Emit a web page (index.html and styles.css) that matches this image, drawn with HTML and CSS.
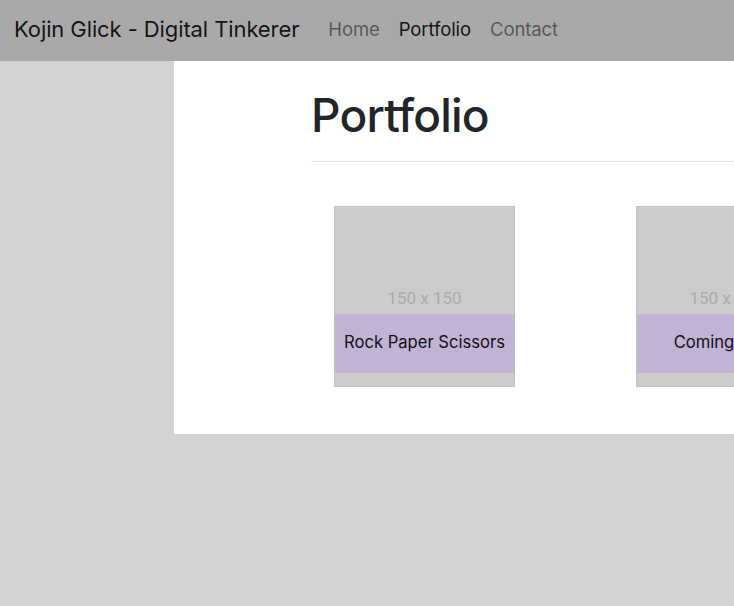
FILE: index.html
```html
<!DOCTYPE html>
<html lang="en">
<head>
<meta charset="utf-8">
<title>Kojin Glick - Portfolio</title>
<link rel="stylesheet" href="styles.css">
</head>
<body>
<nav class="navbar">
  <a class="brand" href="#">Kojin Glick - Digital Tinkerer</a>
  <ul class="nav-links">
    <li><a class="nav-link" href="#">Home</a></li>
    <li><a class="nav-link active" href="#">Portfolio</a></li>
    <li><a class="nav-link" href="#">Contact</a></li>
  </ul>
</nav>
<main class="panel">
  <h1 class="title">Portfolio</h1>
  <hr class="rule">
  <div class="cards">
    <div class="card">
      <div class="placeholder"><span class="ph-text">150 x 150</span></div>
      <div class="caption">Rock Paper Scissors</div>
    </div>
    <div class="card">
      <div class="placeholder"><span class="ph-text">150 x 150</span></div>
      <div class="caption">Coming Soon</div>
    </div>
  </div>
</main>
</body>
</html>
```
FILE: styles.css
```css
html, body {
  margin: 0;
  padding: 0;
  overflow-x: hidden;
}
body {
  background: #d3d3d3;
  font-family: "Inter", "Roboto", "Liberation Sans", sans-serif;
  color: #212529;
  min-height: 606px;
}
.navbar {
  height: 61px;
  box-sizing: border-box;
  background: #a9a9a9;
  display: flex;
  align-items: center;
  padding: 0 14px 4px 14px;
}
.brand {
  font-size: 22px;
  color: rgba(0, 0, 0, 0.9);
  text-decoration: none;
  margin-right: 29px;
  letter-spacing: -0.1px;
}
.nav-links {
  list-style: none;
  margin: 0;
  padding: 0;
  display: flex;
  gap: 19px;
}
.nav-link {
  font-size: 18.5px;
  letter-spacing: -0.1px;
  color: rgba(0, 0, 0, 0.5);
  text-decoration: none;
}
.nav-link.active {
  color: rgba(0, 0, 0, 0.9);
}
.panel {
  margin-left: 174px;
  width: 700px;
  height: 373px;
  box-sizing: border-box;
  background: #fff;
  padding: 0 0 0 137px;
  overflow: hidden;
}
.title {
  margin: 0;
  padding-top: 26px;
  font-size: 46px;
  font-weight: 500;
  line-height: 56px;
  letter-spacing: -0.8px;
}
.rule {
  margin: 18px 0 0 0;
  border: 0;
  border-top: 1px solid #e5e5e5;
}
.cards {
  display: flex;
  gap: 121px;
  padding-left: 23px;
  margin-top: 44px;
}
.card {
  flex: none;
  position: relative;
  width: 179px;
  height: 179px;
  border: 1px solid #b8cab4;
  background: #cccccc;
}
.placeholder {
  height: 100%;
  display: flex;
  align-items: center;
  justify-content: center;
}
.ph-text {
  font-family: "Roboto", "Liberation Sans", sans-serif;
  font-size: 17px;
  color: #ababab;
  margin-top: 3px;
}
.caption {
  position: absolute;
  left: 0;
  right: 0;
  top: 107px;
  height: 59px;
  box-sizing: border-box;
  padding-bottom: 3px;
  background: #c1b3d5;
  display: flex;
  align-items: center;
  justify-content: center;
  font-size: 16.6px;
  color: #111;
  white-space: nowrap;
}
```
